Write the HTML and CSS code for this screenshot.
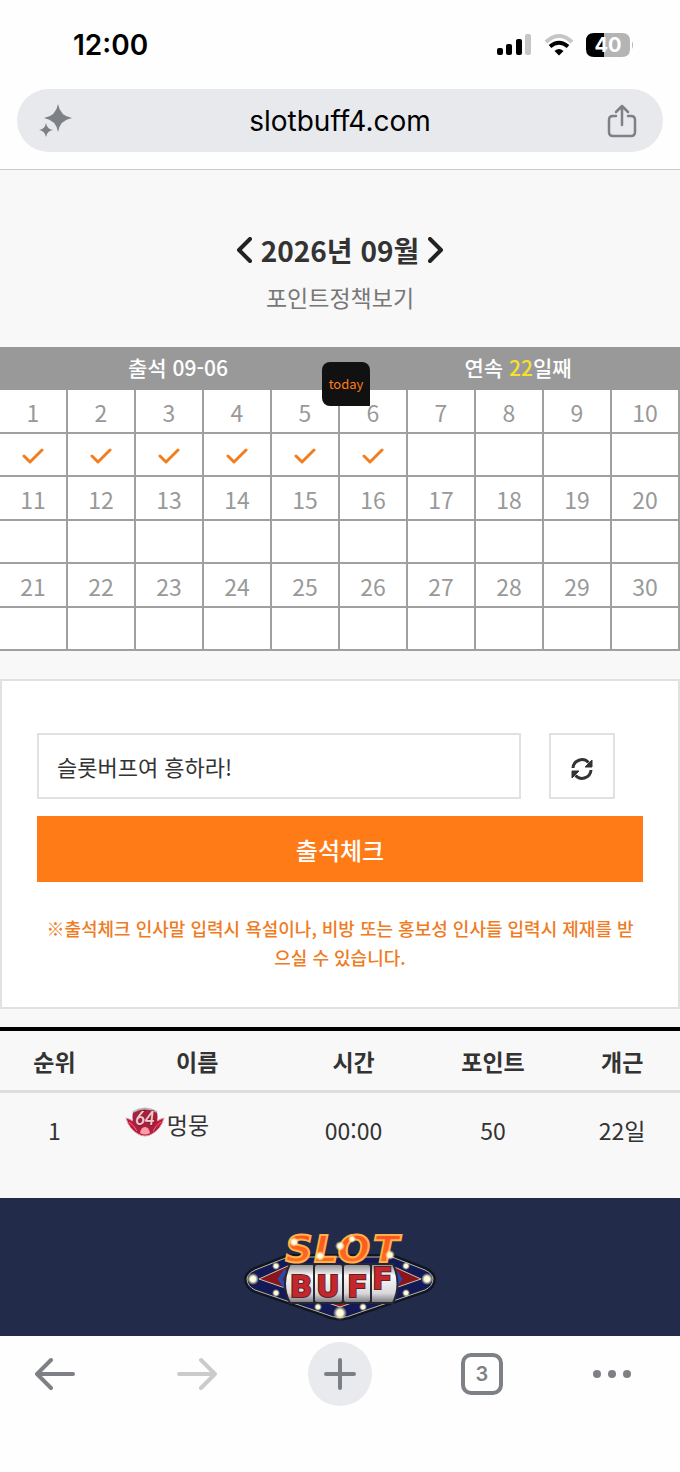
FILE: index.html
```html
<!DOCTYPE html>
<html lang="ko">
<head>
    <meta charset="UTF-8">
    <meta name="viewport" content="width=device-width, initial-scale=1">
    <title>출석체크</title>
    <link rel="stylesheet" href="styles.css">
</head>
<body>

    <header class="browser-top">
        <div class="status-bar">
            <span class="clock">12:00</span>
            <div class="status-icons">
                <svg width="35" height="22" viewBox="0 0 35 22">
                    <rect x="0" y="14" width="6" height="7" rx="2"/>
                    <rect x="9" y="10" width="6" height="11" rx="2"/>
                    <rect x="19" y="5" width="6" height="16" rx="2"/>
                    <rect x="28" y="0" width="6" height="21" rx="2" fill="#c6c6c6"/>
                </svg>
                <svg width="30" height="22" viewBox="0 0 30 22">
                    <path d="M2 8Q15 -4 28 8" fill="none" stroke="#c6c6c6" stroke-width="4"/>
                    <path d="M6 12.500Q15 5 24 12.500" fill="none" stroke="#000" stroke-width="4"/>
                    <path d="M10.500 17Q15 13 19.500 17L15 21.500Z"/>
                </svg>
                <svg width="48" height="24" viewBox="0 0 48 24">
                    <path d="M8 0H18V24H8Q0 24 0 16V8Q0 0 8 0Z"/>
                    <path d="M18 0H36Q44 0 44 8V16Q44 24 36 24H18Z" fill="#b4b4b4"/>
                    <path d="M46 8Q48 12 46 16Z" fill="#b4b4b4"/>
                    <text x="22" y="19" class="battery-text">40</text>
                </svg>
            </div>
        </div>
        <div class="address-bar">
            <button class="icon-button" aria-label="AI">
                <svg width="34" height="34" viewBox="0 0 34 34" fill="#7d8185">
                    <path d="M19 0Q21 12 33 14Q21 16 19 28Q17 16 5 14Q17 12 19 0Z"/>
                    <path d="M7 19Q8 25 14 26Q8 27 7 33Q6 27 0 26Q6 25 7 19Z"/>
                </svg>
            </button>
            <a href="#" class="address">slotbuff4.com</a>
            <button class="icon-button" aria-label="공유">
                <svg width="30" height="34" viewBox="0 0 30 34" fill="none" stroke="#7d8185" stroke-width="2.500" stroke-linecap="round" stroke-linejoin="round">
                    <path d="M9 12H6Q2 12 2 16V28Q2 32 6 32H24Q28 32 28 28V16Q28 12 24 12H21"/>
                    <path d="M15 21V2M9 8L15 2L21 8"/>
                </svg>
            </button>
        </div>
    </header>

    <main>
        <div class="month">
            <button class="month-button" aria-label="이전 달">
                <svg width="16" height="26" viewBox="0 0 16 26"><path d="M14 2L3 13L14 24"/></svg>
            </button>
            <h1 class="month-title">2026년 09월</h1>
            <button class="month-button" aria-label="다음 달">
                <svg width="16" height="26" viewBox="0 0 16 26"><path d="M2 2L13 13L2 24"/></svg>
            </button>
        </div>
        <a href="#" class="policy-link">포인트정책보기</a>

        <svg class="symbols">
            <symbol id="check" viewBox="0 0 22 16">
                <path d="M2 8L8 14L20 2" fill="none" stroke="#f27e20" stroke-width="3" stroke-linecap="round" stroke-linejoin="round"/>
            </symbol>
        </svg>

        <table class="calendar">
            <thead>
                <tr>
                    <th colspan="5">출석 09-06</th>
                    <th colspan="5">연속 <span class="streak">22</span>일째</th>
                </tr>
            </thead>
            <tbody>
                <tr class="days">
                    <td>1</td><td>2</td><td>3</td><td>4</td><td>5</td>
                    <td class="today-cell"><span class="today">today</span>6</td>
                    <td>7</td><td>8</td><td>9</td><td>10</td>
                </tr>
                <tr class="marks">
                    <td><svg class="check"><use href="#check"/></svg></td>
                    <td><svg class="check"><use href="#check"/></svg></td>
                    <td><svg class="check"><use href="#check"/></svg></td>
                    <td><svg class="check"><use href="#check"/></svg></td>
                    <td><svg class="check"><use href="#check"/></svg></td>
                    <td><svg class="check"><use href="#check"/></svg></td>
                    <td></td><td></td><td></td><td></td>
                </tr>
                <tr class="days">
                    <td>11</td><td>12</td><td>13</td><td>14</td><td>15</td>
                    <td>16</td><td>17</td><td>18</td><td>19</td><td>20</td>
                </tr>
                <tr class="marks">
                    <td></td><td></td><td></td><td></td><td></td>
                    <td></td><td></td><td></td><td></td><td></td>
                </tr>
                <tr class="days">
                    <td>21</td><td>22</td><td>23</td><td>24</td><td>25</td>
                    <td>26</td><td>27</td><td>28</td><td>29</td><td>30</td>
                </tr>
                <tr class="marks">
                    <td></td><td></td><td></td><td></td><td></td>
                    <td></td><td></td><td></td><td></td><td></td>
                </tr>
            </tbody>
        </table>

        <form class="check-form">
            <div class="greeting-row">
                <input type="text" class="greeting" aria-label="인사말" value="슬롯버프여 흥하라!">
                <button type="button" class="refresh" aria-label="새로고침">
                    <svg width="24" height="24" viewBox="0 0 24 24">
                        <path d="M3 11A9 9 0 0 1 18.500 5.500" fill="none" stroke="#333" stroke-width="3"/>
                        <path d="M21 13A9 9 0 0 1 5.500 18.500" fill="none" stroke="#333" stroke-width="3"/>
                        <path d="M22 3V10H15Z" fill="#333" stroke="#333" stroke-linejoin="round"/>
                        <path d="M2 21V14H9Z" fill="#333" stroke="#333" stroke-linejoin="round"/>
                    </svg>
                </button>
            </div>
            <button type="submit" class="submit">출석체크</button>
            <p class="notice">※출석체크 인사말 입력시 욕설이나, 비방 또는 홍보성 인사들 입력시 제재를 받으실 수 있습니다.</p>
        </form>

        <table class="ranking">
            <thead>
                <tr>
                    <th class="col-rank">순위</th>
                    <th class="col-name">이름</th>
                    <th class="col-time">시간</th>
                    <th class="col-point">포인트</th>
                    <th class="col-days">개근</th>
                </tr>
            </thead>
            <tbody>
                <tr>
                    <td>1</td>
                    <td class="name-cell">
                        <div class="member">
                            <svg width="40" height="30" viewBox="0 0 40 30">
                                <path d="M1 11Q9 13 12 19L28 19Q31 13 39 11Q36 22 27 27Q20 31 13 27Q4 22 1 11Z" fill="#bd1739" stroke="#d6a0aa"/>
                                <path d="M8 5Q20 -2 32 5Q34 16 28 24H12Q6 16 8 5Z" fill="#a8213c"/>
                                <path d="M8 5Q20 -2 32 5" fill="none" stroke="#b9b5b5" stroke-width="2"/>
                                <text x="20" y="18" class="level-text">64</text>
                                <path d="M15 26Q16 20 20 20Q24 20 25 26Q20 29 15 26Z" fill="#ff9baa"/>
                                <path d="M4 15Q9 18 12 24M36 15Q31 18 28 24" fill="none" stroke="#ef6d80" stroke-width="1"/>
                            </svg>
                            <span>멍뭉</span>
                        </div>
                    </td>
                    <td>00:00</td>
                    <td>50</td>
                    <td>22일</td>
                </tr>
            </tbody>
        </table>
    </main>

    <footer class="site-footer">
        <a href="#" class="logo" aria-label="SLOT BUFF">
            <svg width="196" height="106" viewBox="0 -10 196 106">
                <defs>
                    <linearGradient id="reel" x1="0" y1="0" x2="0" y2="1">
                        <stop offset="0" stop-color="#8d8d90"/>
                        <stop offset="0.300" stop-color="#fafafa"/>
                        <stop offset="0.750" stop-color="#d9d9dc"/>
                        <stop offset="1" stop-color="#77777c"/>
                    </linearGradient>
                    <radialGradient id="bulb">
                        <stop offset="0" stop-color="#fff"/>
                        <stop offset="0.450" stop-color="#fffbd0"/>
                        <stop offset="1" stop-color="#fff5b0" stop-opacity="0"/>
                    </radialGradient>
                    <linearGradient id="fire" x1="0" y1="0" x2="0" y2="1">
                        <stop offset="0" stop-color="#fb4d1c"/>
                        <stop offset="1" stop-color="#ff7420"/>
                    </linearGradient>
                </defs>
                <!-- neon diamond -->
                <path d="M13 42Q5 46 5 51Q5 58 13 62L83 86Q98 93 113 86L183 62Q191 58 191 51Q191 46 183 42L150 29H46Z" fill="#141a58" stroke="#111525" stroke-width="6"/>
                <path d="M13 42Q5 46 5 51Q5 58 13 62L83 86Q98 93 113 86L183 62Q191 58 191 51Q191 46 183 42L150 29H46Z" fill="#141a58" stroke="#b9b98c" stroke-width="1"/>
                <path d="M17 51L48 37H148L179 51L98 79Z" fill="#8b151d" stroke="#c9c6a4" stroke-width="1"/>
                <path d="M44 42L38 51L44 60M152 42L158 51L152 60" fill="none" stroke="#234cb5" stroke-width="4"/>
                <!-- reels -->
                <g fill="url(#reel)" stroke="#252733" stroke-width="2">
                    <path d="M48 36H72V75H48Q38 56 48 36Z"/>
                    <rect x="72" y="36" width="29" height="39" rx="3"/>
                    <rect x="101" y="36" width="28" height="39" rx="3"/>
                    <path d="M129 36H151Q160 56 151 75H129Z"/>
                </g>
                <g class="logo-buff">
                    <text x="59" y="69">B</text>
                    <text x="86" y="69">U</text>
                    <text x="115" y="69">F</text>
                    <text x="140" y="61">F</text>
                </g>
                <g class="logo-slot">
                    <text x="57" y="34">S</text>
                    <text x="84" y="34">L</text>
                    <text x="112" y="34">O</text>
                    <text x="144" y="34">T</text>
                </g>
                <g fill="url(#bulb)">
                    <circle cx="11" cy="51" r="6"/>
                    <circle cx="34" cy="38" r="4"/>
                    <circle cx="34" cy="65" r="4"/>
                    <circle cx="76" cy="79" r="4"/>
                    <circle cx="98" cy="85" r="7"/>
                    <circle cx="121" cy="79" r="4"/>
                    <circle cx="164" cy="38" r="4"/>
                    <circle cx="164" cy="65" r="4"/>
                    <circle cx="185" cy="51" r="6"/>
                    <circle cx="52" cy="14" r="5"/>
                    <circle cx="78" cy="28" r="5"/>
                    <circle cx="98" cy="18" r="5"/>
                    <circle cx="110" cy="11" r="4"/>
                    <circle cx="148" cy="27" r="5"/>
                </g>
            </svg>
        </a>
    </footer>

    <nav class="browser-bottom">
        <button class="nav-button" aria-label="뒤로">
            <svg width="40" height="34" viewBox="0 0 40 34" stroke="#7d8185"><path d="M38 17H2M16 3L2 17L16 31"/></svg>
        </button>
        <button class="nav-button" aria-label="앞으로" disabled>
            <svg width="40" height="34" viewBox="0 0 40 34" stroke="#cacbcc"><path d="M2 17H38M24 3L38 17L24 31"/></svg>
        </button>
        <button class="nav-button nav-new" aria-label="새 탭">
            <svg width="34" height="34" viewBox="0 0 34 34" stroke="#7b7f86"><path d="M17 3V31M3 17H31"/></svg>
        </button>
        <button class="nav-button" aria-label="탭"><span class="tab-count">3</span></button>
        <button class="nav-button nav-more" aria-label="더보기">
            <svg width="40" height="10" viewBox="0 0 40 10"><circle cx="5" cy="5" r="4"/><circle cx="20" cy="5" r="4"/><circle cx="35" cy="5" r="4"/></svg>
        </button>
    </nav>

</body>
</html>
```
FILE: styles.css
```css
* {
    box-sizing: border-box;
}

body {
    margin: 0;
    background-color: #f8f8f8;
    color: #333;
    font-family: "Noto Sans CJK KR", sans-serif;
    font-size: 23px;
}

button {
    display: flex;
    align-items: center;
    justify-content: center;
    margin: 0;
    padding: 0;
    border: none;
    background: none;
    color: inherit;
    font-family: inherit;
}

a {
    color: inherit;
    text-decoration: none;
}

svg {
    display: block;
    flex: none;
}

/* browser top */
.browser-top {
    background-color: #fefefe;
    border-bottom: 1px solid #c8cac9;
    padding: 0 17px 17px;
    font-family: Inter, sans-serif;
    color: #000;
}

.status-bar {
    display: flex;
    justify-content: space-between;
    align-items: center;
    height: 89px;
    padding: 0 29px 0 56px;
}

.clock {
    font-size: 28px;
    font-weight: 600;
}

.status-icons {
    display: flex;
    align-items: center;
    gap: 12px;
}

.battery-text {
    fill: #fff;
    font-size: 20px;
    font-weight: 700;
    text-anchor: middle;
}

.address-bar {
    display: flex;
    align-items: center;
    justify-content: space-between;
    height: 63px;
    padding: 0 26px 0 22px;
    border-radius: 32px;
    background-color: #e8e9ed;
}

.address {
    font-size: 28px;
}

/* month */
.month {
    display: flex;
    align-items: center;
    justify-content: center;
    gap: 9px;
    padding-top: 60px;
}

.month-title {
    margin: 0;
    font-size: 28px;
    line-height: 40px;
}

.month-button path {
    fill: none;
    stroke: #222;
    stroke-width: 4;
    stroke-linecap: round;
    stroke-linejoin: round;
}

.policy-link {
    display: block;
    padding: 12px 0 35px;
    color: #777;
    line-height: 30px;
    text-align: center;
}

/* calendar */
.symbols {
    width: 0;
    height: 0;
    position: absolute;
}

.calendar {
    width: 100%;
    table-layout: fixed;
    border-spacing: 0;
    background-color: #fff;
    color: #999;
    line-height: 32px;
    text-align: center;
}

.calendar th {
    height: 43px;
    padding: 0 0 4px 16px;
    background-color: #999;
    color: #fff;
    font-size: 21px;
    font-weight: 500;
}

.calendar td {
    padding: 0;
    border-right: 2px solid #a0a0a0;
    border-bottom: 2px solid #a0a0a0;
}

.calendar .days td {
    height: 44px;
    padding-top: 2px;
}

.marks td {
    height: 43px;
}

.calendar .marks td {
    padding-top: 2px;
}

.streak {
    color: #f5e02a;
}

.today-cell {
    position: relative;
}

.today {
    position: absolute;
    left: -18px;
    top: -28px;
    width: 48px;
    height: 44px;
    border-radius: 8px 8px 0 8px;
    background-color: #111;
    color: #ff7d1a;
    font-size: 13px;
    line-height: 44px;
}

.check {
    width: 22px;
    height: 16px;
    margin: 0 auto;
}

/* attendance form */
.check-form {
    margin: 28px 0 18px;
    padding: 52px 35px 35px;
    border: 2px solid #e1e1e1;
    background-color: #fff;
}

.greeting-row {
    display: flex;
    gap: 28px;
    padding-right: 28px;
}

.greeting {
    flex: 1;
    min-width: 0;
    height: 66px;
    padding: 0 18px;
    border: 2px solid #e1e1e1;
    background-color: #fff;
    color: #333;
    font-family: inherit;
    font-size: 22px;
}

.refresh {
    width: 66px;
    height: 66px;
    padding-top: 5px;
    border: 2px solid #e1e1e1;
}

.submit {
    width: 100%;
    height: 66px;
    margin: 17px 0 32px;
    background-color: #ff7b17;
    color: #fff;
    font-size: 24px;
    font-weight: 500;
}

.notice {
    margin: 0;
    padding: 0 6px;
    color: #ef7b22;
    font-size: 18px;
    font-weight: 500;
    line-height: 29px;
    text-align: center;
}

/* ranking */
.ranking {
    width: 100%;
    table-layout: fixed;
    border-spacing: 0;
    border-top: 4px solid #000;
    text-align: center;
}

.ranking th {
    height: 62px;
    padding: 0;
    border-bottom: 3px solid #ddd;
    font-weight: 700;
}

.ranking td {
    height: 105px;
    padding: 20px 0 0;
    line-height: 34px;
    vertical-align: top;
}

.ranking .name-cell {
    padding-top: 14px;
}

.col-rank {
    width: 16%;
}

.col-name {
    width: 26%;
}

.col-time {
    width: 20%;
}

.col-point {
    width: 21%;
}

.col-days {
    width: 17%;
}

.member {
    display: flex;
    gap: 2px;
    padding-left: 16px;
}

.level-text {
    fill: #f7c8cf;
    stroke: #6d1023;
    stroke-width: 1;
    paint-order: stroke;
    font-family: Lato, sans-serif;
    font-size: 18px;
    font-style: italic;
    font-weight: 700;
    text-anchor: middle;
}

/* footer */
.site-footer {
    display: flex;
    justify-content: center;
    padding: 20px 0 12px;
    background-color: #222b49;
}

.logo-buff {
    fill: #c4282c;
    stroke: #5c2025;
    stroke-width: 2;
    paint-order: stroke;
    font-family: Roboto, sans-serif;
    font-size: 32px;
    font-weight: 900;
    text-anchor: middle;
}

.logo-slot {
    fill: url(#fire);
    stroke: #ffb04a;
    stroke-width: 2;
    font-family: "DejaVu Sans", sans-serif;
    font-size: 38px;
    font-style: italic;
    font-weight: 700;
    text-anchor: middle;
}

/* browser bottom */
.browser-bottom {
    display: flex;
    justify-content: space-between;
    height: 136px;
    padding: 6px 48px 0 23px;
    background-color: #fefefe;
}

.nav-button {
    width: 64px;
    height: 64px;
}

.nav-button svg {
    fill: none;
    stroke-width: 4;
    stroke-linecap: round;
    stroke-linejoin: round;
}

.nav-new {
    border-radius: 50%;
    background-color: #e8eaee;
}

.nav-more {
    width: 40px;
}

.nav-more svg {
    fill: #7d8185;
}

.tab-count {
    width: 42px;
    height: 42px;
    border: 4px solid #7d8185;
    border-radius: 10px;
    color: #7d8185;
    font-family: Inter, sans-serif;
    font-size: 20px;
    font-weight: 600;
    line-height: 34px;
}
```
